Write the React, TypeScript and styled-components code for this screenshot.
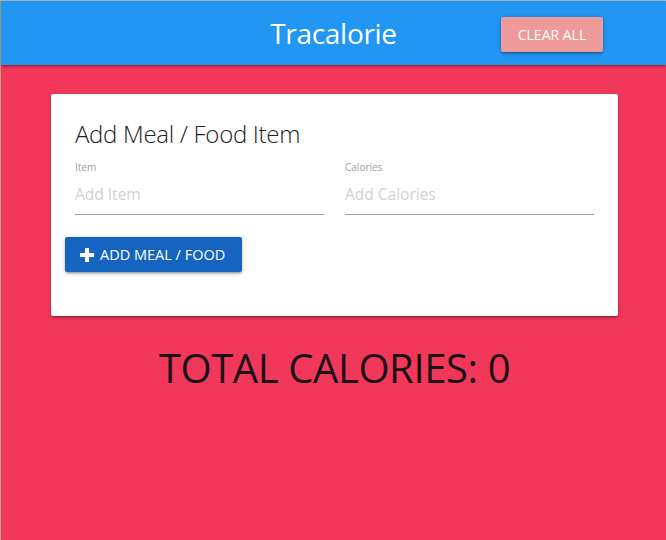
import React from "react";
import styled, { createGlobalStyle } from "styled-components";

const Global = createGlobalStyle`
  html, body { margin: 0; padding: 0; }
  body {
    background: #f2385a;
    font-family: "Open Sans", "Noto Sans", sans-serif;
    width: 666px;
    height: 540px;
    overflow: hidden;
  }
  * { box-sizing: border-box; }
`;

const Frame = styled.div`
  height: 540px;
  border-top: 1px solid #b8b8b8;
  border-left: 1px solid #b5a57c;
  background: #f2385a;
`;

const Nav = styled.nav`
  height: 64px;
  background: #2196f3;
  position: relative;
  display: flex;
  align-items: center;
  justify-content: center;
  box-shadow: 0 2px 2px 0 rgba(0,0,0,0.14), 0 3px 1px -2px rgba(0,0,0,0.12), 0 1px 5px 0 rgba(0,0,0,0.2);
`;

const Brand = styled.div`
  color: #fff;
  font-size: 28px;
  font-weight: 400;
  letter-spacing: -0.3px;
`;

const ClearButton = styled.button`
  position: absolute;
  left: 500px;
  top: 16px;
  width: 102px;
  height: 35px;
  border: none;
  border-radius: 2px;
  background: #ef9a9a;
  color: #fff;
  font-family: inherit;
  font-size: 14px;
  text-transform: uppercase;
  box-shadow: 0 2px 2px 0 rgba(0,0,0,0.14), 0 3px 1px -2px rgba(0,0,0,0.12), 0 1px 5px 0 rgba(0,0,0,0.2);
`;

const Container = styled.div`
  width: 567px;
  margin: 29px 0 0 50px;
`;

const Card = styled.div`
  background: #fff;
  border-radius: 2px;
  padding: 24px 24px 44px;
  box-shadow: 0 2px 2px 0 rgba(0,0,0,0.14), 0 3px 1px -2px rgba(0,0,0,0.12), 0 1px 5px 0 rgba(0,0,0,0.2);
`;

const CardTitle = styled.div`
  font-size: 24px;
  font-weight: 300;
  line-height: 32px;
  color: #222;
  letter-spacing: -0.3px;
`;

const Row = styled.div`
  display: grid;
  grid-template-columns: 1fr 1fr;
  column-gap: 21px;
  margin-top: 10px;
`;

const Field = styled.div`
  display: flex;
  flex-direction: column;
`;

const Label = styled.label`
  font-size: 10px;
  color: #9e9e9e;
  line-height: 14px;
`;

const Input = styled.input`
  border: none;
  border-bottom: 1px solid #9e9e9e;
  outline: none;
  height: 36px;
  margin-top: 5px;
  padding: 0 0 5px;
  font-family: inherit;
  font-size: 15.5px;
  color: #333;
  background: transparent;
  &::placeholder { color: #d1d1d1; }
`;

const AddButton = styled.button`
  margin: 22px 0 0 -10px;
  height: 35px;
  width: 177px;
  border: none;
  border-radius: 2px;
  background: #1565c0;
  color: #fff;
  font-family: inherit;
  font-size: 14.5px;
  text-transform: uppercase;
  display: flex;
  align-items: center;
  padding: 0 0 0 15px;
  gap: 6px;
  box-shadow: 0 2px 2px 0 rgba(0,0,0,0.14), 0 3px 1px -2px rgba(0,0,0,0.12), 0 1px 5px 0 rgba(0,0,0,0.2);
`;

const Total = styled.h3`
  margin: 24px 0 0;
  text-align: center;
  font-size: 40px;
  font-weight: 400;
  color: #1a1016;
  text-transform: uppercase;
  letter-spacing: -0.4px;
`;

const Plus = () => (
  <svg width="14" height="14" viewBox="0 0 14 14">
    <path d="M5 0h4v5h5v4H9v5H5V9H0V5h5z" fill="#fff" />
  </svg>
);

export default function App() {
  return (
    <>
      <Global />
      <Frame>
        <Nav>
          <Brand>Tracalorie</Brand>
          <ClearButton>Clear All</ClearButton>
        </Nav>
        <Container>
          <Card>
            <CardTitle>Add Meal / Food Item</CardTitle>
            <Row>
              <Field>
                <Label>Item</Label>
                <Input placeholder="Add Item" />
              </Field>
              <Field>
                <Label>Calories</Label>
                <Input placeholder="Add Calories" />
              </Field>
            </Row>
            <AddButton>
              <Plus />
              Add Meal / Food
            </AddButton>
          </Card>
          <Total>Total Calories: 0</Total>
        </Container>
      </Frame>
    </>
  );
}
